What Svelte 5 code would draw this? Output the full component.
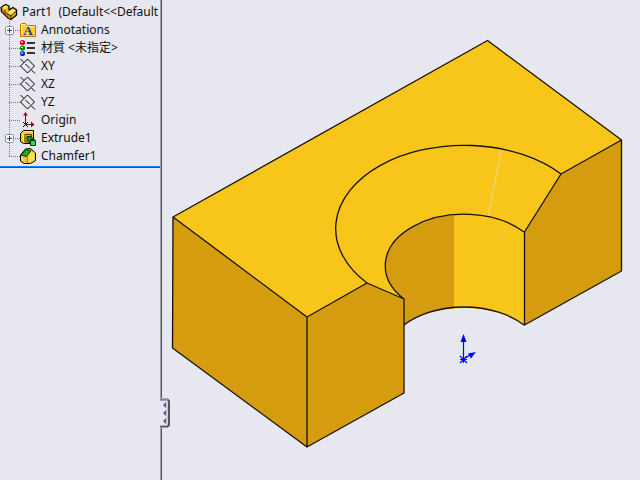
<script lang="ts">
	type Icon = 'annotations' | 'material' | 'plane' | 'origin' | 'extrude' | 'chamfer';

	const features: { label: string; icon: Icon; children?: boolean }[] = [
		{ label: 'Annotations', icon: 'annotations', children: true },
		{ label: '材質 <未指定>', icon: 'material' },
		{ label: 'XY', icon: 'plane' },
		{ label: 'XZ', icon: 'plane' },
		{ label: 'YZ', icon: 'plane' },
		{ label: 'Origin', icon: 'origin' },
		{ label: 'Extrude1', icon: 'extrude', children: true },
		{ label: 'Chamfer1', icon: 'chamfer' }
	];

	let collapsed = $state(false);
</script>

<main class="workspace">
	{#if !collapsed}
		<aside class="manager">
			<div class="root">
				<svg class="part-icon" viewBox="0 0 18 18" aria-hidden="true">
					<path
						d="M1 4.500 5.500 1.500 9 3V7L13 4.500 16.500 7V12L11 16.500 8.500 15.500 1.500 8.500Z"
						fill="#f2bd14"
						stroke="#000"
						stroke-width="1.3"
						stroke-linejoin="round"
					/>
					<path d="M2 5.500 5 7.500 5 10.500 2 8ZM5 9 11 13V16L9 15 5 11Z" fill="#c98c05" />
					<path d="M2.500 4.500 5.500 2.500 8 3.500 5 6ZM8 9.500 13 6 15.500 7.500 11 11.500Z" fill="#ffee68" />
					<path d="M5 7V9.500L11 13 16 8.500M11 13V16" fill="none" stroke="#3b2a00" />
				</svg>
				<span>Part1&nbsp; (Default&lt;&lt;Default</span>
			</div>
			<ul class="tree">
				{#each features as feature, i (feature.label)}
					<li>
						<span class="branch" class:last={i === features.length - 1}>
							{#if feature.children}
								<button class="expand" aria-label={`Expand ${feature.label}`}>
									<svg viewBox="0 0 9 9" aria-hidden="true">
										<rect x="0.5" y="0.5" width="8" height="8" rx="1" fill="#fff" stroke="#919191" />
										<path d="M2 4.500H7M4.500 2V7" stroke="#26467f" />
									</svg>
								</button>
							{/if}
						</span>
						<svg class="icon" viewBox="0 0 16 16" aria-hidden="true">
							{#if feature.icon === 'annotations'}
								<path d="M.5 14.500V2.500L1.500 1.500H5.500L7 3.500H15.500V14.500Z" fill="#ffce31" stroke="#b47a00" />
								<path d="M1.500 13V2.500H5L6.500 4.500H14.500" fill="none" stroke="#ffef9a" />
								<text x="8" y="13" class="letter">A</text>
							{:else if feature.icon === 'material'}
								<circle cx="2.500" cy="2.500" r="2.600" fill="#e00000" />
								<circle cx="2.500" cy="8" r="2.600" fill="#079207" />
								<circle cx="2.500" cy="13.500" r="2.600" fill="#0827e5" />
								<path d="M1 2H3M1 7.500H3M1 13H3" stroke="#fff" />
								<path d="M7 3H15M7 8H15M7 13H15" stroke="#333" stroke-width="2" />
							{:else if feature.icon === 'plane'}
								<path d="M7.500 1 14.500 8 7.500 15 .5 8Z" fill="none" stroke="#000" />
								<path d="M.5 1 4 4.500M5.500 6 10 10.500M11.500 12 15 15.500" stroke="#000" />
							{:else if feature.icon === 'origin'}
								<path d="M5.500 12V2M6 12.500H14" stroke="#5c1010" />
								<path d="M3 10 8 15M8 10 3 15" stroke="#000" />
								<path d="M5.500 0 8 3.500H3ZM14.500 12.500 11 9.500V15.500Z" fill="#a00018" />
							{:else if feature.icon === 'extrude'}
								<path
									d="M.5 3.500 3.500 .5H13.500V9L11 13.500H3.500L.5 11.500Z"
									fill="#f6c51b"
									stroke="#000"
									stroke-linejoin="round"
								/>
								<path d="M1.500 4 4 1.500H12.500M3.500 4.500V12" fill="none" stroke="#fff384" />
								<path d="M5 4.500H11.500V12H5Z" fill="#eeb519" stroke="#5a3c00" />
								<path d="M7 6.500H10.500L14.500 9.500H10.500V13.500L7 10Z" fill="#159022" stroke="#003b00" />
								<path d="M10.500 10.500H15.500V15.500H10.500Z" fill="#49cf4f" stroke="#003b00" />
							{:else}
								<path
									d="M.5 7 5.500 1 10.500 .5 15.500 5V12.500L10.500 15.500H4L.5 13Z"
									fill="#f6c51b"
									stroke="#000"
									stroke-linejoin="round"
								/>
								<path d="M8 8.500 12 3.500 14.500 5.500V12L10.500 14.500H8Z" fill="#ffdc58" />
								<path d="M1 7 6 1.500 11 2.500 6.500 8.500Z" fill="#24aa2b" stroke="#003b00" />
								<path d="M7.500 8.500V15" stroke="#bb8209" />
								<path d="M2.500 9V12.500" stroke="#ffe56c" stroke-width="1.5" />
							{/if}
						</svg>
						<span class="label">{feature.label}</span>
					</li>
				{/each}
			</ul>
			<div class="rollback"></div>
		</aside>
	{/if}

	<div class="splitter">
		<button
			class="handle"
			aria-label={collapsed ? 'Show feature tree' : 'Hide feature tree'}
			onclick={() => (collapsed = !collapsed)}
		>
			<svg viewBox="0 0 10 30" aria-hidden="true">
				<path d="M0 1.500H7.500L9 3V27L7.500 28.500H0" fill="#e7e7ef" stroke="#55525a" stroke-width="2" />
				<path d="M0 1H7V27.500H0" fill="none" stroke="#b8b6bd" />
				<path d="M6 4V10L3 7ZM6 12V18L3 15ZM6 20V26L3 23Z" fill="#5554a4" />
			</svg>
		</button>
	</div>

	<section class="viewport">
		<svg viewBox="162 0 478 480" role="img" aria-label="Isometric view of Part1">
			<!-- side faces -->
			<g class="shade">
				<path d="M173 217 307 317V447L173 348Z" />
				<path d="M307 317 367 283 404 299V393L307 447Z" />
				<path d="M561 174 621 140V271L524 325V232Z" />
			</g>

			<!-- bore -->
			<path class="shade" d="M404 299A79 51.500 0 0 1 463 214.500H454V308.500A79 51.500 0 0 0 404 325Z" />
			<path class="lit" d="M454 214.500A79 51.500 0 0 1 524 232V325A79 51.500 0 0 0 454 308.500Z" />

			<!-- top face and chamfer -->
			<path
				class="lit"
				d="M173 217 487.500 40.500 621 140 561 174 524 232A79 51.500 0 0 0 404 299L367 283 307 317Z"
			/>

			<path class="seam" d="M501.500 149 488 217" />
			<g class="edge">
				<path d="M307 317 173 217 487.500 40.500 621.500 140V271L524.500 325V232L561 174 621.500 140" />
				<path d="M173 217 172.500 348 307 447 404 393V299L367 283 307 317V447" />
				<path d="M367 283A128 83 0 0 1 561 174" />
				<path d="M404 299A79 51.500 0 0 1 524 232" />
				<path d="M404 325A79 51.500 0 0 1 524 325" />
			</g>

			<g class="triad">
				<path d="M463.500 359V341M463.500 359 470 355M460 359.500H467M460 356 467 363M467 356 460 363M463.500 356V363" />
				<path class="tip" d="M463.500 334 466.500 342H460.500ZM476 352 468 353.500 471 358.500Z" />
			</g>
		</svg>
	</section>
</main>

<style>
	:global(body) {
		margin: 0;
		background: #e7e7ef;
	}

	.workspace {
		display: flex;
		height: 100vh;
		overflow: hidden;
		background: #e7e7ef;
		color: #111;
		font-family: 'Noto Sans', 'Noto Sans CJK TC', sans-serif;
		font-size: 12px;
		line-height: 18px;
	}

	.manager {
		flex: 0 0 160px;
		overflow: hidden;
		padding-top: 3px;
		box-sizing: border-box;
	}

	.root {
		display: flex;
		gap: 4px;
		height: 18px;
		white-space: nowrap;
	}

	.part-icon {
		flex: none;
		width: 18px;
		height: 18px;
	}

	.tree {
		margin: 0;
		padding: 0;
		list-style: none;
	}

	.tree li {
		display: flex;
		align-items: center;
		height: 18px;
		white-space: nowrap;
	}

	.branch {
		display: flex;
		align-items: center;
		flex: none;
		width: 20px;
		height: 18px;
		padding-left: 5px;
		box-sizing: border-box;
		background:
			repeating-linear-gradient(to bottom, #777 0 1px, transparent 1px 2px) 9px 0 / 1px 100% no-repeat,
			repeating-linear-gradient(to right, #777 0 1px, transparent 1px 2px) 9px 9px / 11px 1px no-repeat;
	}

	.branch.last {
		background-size:
			1px 10px,
			11px 1px;
	}

	.expand {
		width: 9px;
		height: 9px;
		padding: 0;
		border: 0;
		background: none;
	}

	.expand svg {
		display: block;
		width: 9px;
		height: 9px;
	}

	.icon {
		flex: none;
		width: 16px;
		height: 16px;
		margin-right: 5px;
		overflow: visible;
	}

	.letter {
		fill: #143b9c;
		font-family: 'Liberation Serif', serif;
		font-size: 13px;
		font-weight: 700;
		text-anchor: middle;
	}

	.rollback {
		height: 2px;
		margin-top: 1px;
		box-sizing: border-box;
		border-bottom: 1px solid #0a5cb8;
		background: #0a84ff;
	}

	.splitter {
		position: relative;
		flex: 0 0 2px;
		background: linear-gradient(to right, #a5a3aa 50%, #55525a 50%);
	}

	.handle {
		position: absolute;
		top: 83%;
		left: 0;
		z-index: 1;
		width: 10px;
		height: 30px;
		padding: 0;
		border: 0;
		background: #e7e7ef;
	}

	.handle svg {
		display: block;
		width: 10px;
		height: 30px;
	}

	.viewport {
		flex: 1;
		min-width: 0;
	}

	.viewport svg {
		display: block;
		width: 100%;
		height: 100%;
	}

	.lit {
		fill: #f8c61a;
	}

	.shade {
		fill: #d69c10;
	}

	.edge {
		fill: none;
		stroke: #141008;
		stroke-width: 1.3;
		stroke-linejoin: round;
	}

	.seam {
		stroke: #e9d88b;
	}

	.triad {
		fill: none;
		stroke: #00f;
		stroke-width: 1.2;
	}

	.tip {
		fill: #00f;
		stroke: none;
	}
</style>
